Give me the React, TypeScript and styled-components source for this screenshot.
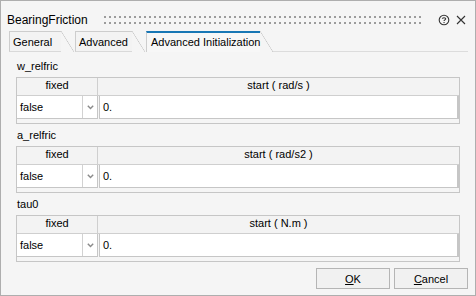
import styled, { createGlobalStyle } from "styled-components";

const GlobalStyle = createGlobalStyle`
    html, body {
        margin: 0;
        padding: 0;
        background: #f5f5f5;
    }
    body {
        font-family: "Liberation Sans", Arial, sans-serif;
        font-size: 11px;
        color: #000;
    }
`;

const Window = styled.div`
    width: 476px;
    height: 296px;
    box-sizing: border-box;
    border: 1px solid #aeaeae;
    background: #f5f5f5;
    display: flex;
    flex-direction: column;
`;

const TitleBar = styled.div`
    height: 30px;
    display: flex;
    align-items: center;
    padding: 0 9px 0 6px;
    box-sizing: border-box;
`;

const Title = styled.div`
    font-size: 12px;
    line-height: 14px;
    padding-top: 6px;
    padding-top: 7px;
    margin-right: 16px;
`;

const Grip = styled.svg`
    flex: 1;
    height: 8px;
    margin-top: 7px;
    margin-right: 8px;
`;

const TitleIcon = styled.svg`
    margin-top: 7px;
    margin-left: 6px;
    flex: none;
`;

const TabBar = styled.div`
    height: 21px;
    display: flex;
    align-items: stretch;
    padding-left: 8px;
`;

const Tab = styled.div<{ $width: number; $active?: boolean }>`
    position: relative;
    width: ${(p) => p.$width}px;
    margin-right: 14px;
    box-sizing: border-box;
    border-left: 1px solid #cdcdcd;
    border-top: ${(p) => (p.$active ? "2px solid #1877b5" : "1px solid #cdcdcd")};
    border-bottom: ${(p) => (p.$active ? "none" : "1px solid #d9d9d9")};
    padding: ${(p) => (p.$active ? "2px" : "3px")} 0 0 ${(p) => (p.$active ? "4px" : "3px")};
    line-height: 14px;
    white-space: nowrap;
    background: ${(p) => (p.$active ? "#f7f7f7" : "#f3f3f3")};

    &::after {
        content: "";
        position: absolute;
        top: ${(p) => (p.$active ? "-2px" : "-1px")};
        right: -13px;
        width: 13px;
        height: 21px;
        background: linear-gradient(
            to top right,
            transparent calc(50% - 0.6px),
            #c9c9c9 50%,
            transparent calc(50% + 0.6px)
        );
    }
`;

const TabFiller = styled.div`
    flex: 1;
    margin-left: -2px;
    margin-right: 7px;
    border-bottom: 1px solid #dcdcdc;
`;

const Content = styled.div`
    flex: 1;
    padding: 7px 15px 0;
    display: flex;
    flex-direction: column;
    gap: 4px;
`;

const Section = styled.div`
    display: flex;
    flex-direction: column;
    gap: 4px;
`;

const Label = styled.div`
    height: 14px;
    line-height: 14px;
    padding-left: 1px;
`;

const Table = styled.div`
    height: 47px;
    box-sizing: border-box;
    border: 1px solid #c6c6c6;
    display: grid;
    grid-template-columns: 81px 1fr;
    grid-template-rows: 18px 23px 4px;
    background: #f5f5f5;
`;

const HeaderCell = styled.div<{ $last?: boolean }>`
    border-bottom: 1px solid #cfcfcf;
    border-right: ${(p) => (p.$last ? "none" : "1px solid #cfcfcf")};
    text-align: center;
    line-height: 14px;
    background: #f3f3f3;
`;

const Combo = styled.div`
    display: flex;
    background: #fff;
    border: 1px solid #c6c6c6;
    border-left: none;
    border-top: none;
    margin-right: 0;
`;

const ComboText = styled.div`
    flex: 1;
    padding-left: 3px;
    line-height: 22px;
`;

const ComboButton = styled.div`
    width: 14px;
    border-left: 1px solid #d2d2d2;
    display: flex;
    align-items: center;
    justify-content: center;
`;

const ValueCell = styled.div`
    margin-left: 1px;
    background: #fff;
    border: 1px solid #c6c6c6;
    border-top: none;
    border-right-width: 2px;
    padding-left: 3px;
    line-height: 22px;
`;

const Strip = styled.div`
    grid-column: 1 / span 2;
`;

const Footer = styled.div`
    display: flex;
    justify-content: flex-end;
    gap: 4px;
    padding: 0 7px 6px 0;
`;

const Button = styled.button`
    width: 74px;
    height: 21px;
    box-sizing: border-box;
    border: 1px solid #b5b5b5;
    background: #f1f1f1;
    font-family: "Liberation Sans", Arial, sans-serif;
    font-size: 11px;
    color: #000;
    padding: 0;
`;

interface Param {
    name: string;
    unit: string;
}

const params: Param[] = [
    { name: "w_relfric", unit: "rad/s" },
    { name: "a_relfric", unit: "rad/s2" },
    { name: "tau0", unit: "N.m" },
];

function ParamTable({ p }: { p: Param }) {
    return (
        <Section>
            <Label>{p.name}</Label>
            <Table>
                <HeaderCell>fixed</HeaderCell>
                <HeaderCell $last>start ( {p.unit} )</HeaderCell>
                <Combo>
                    <ComboText>false</ComboText>
                    <ComboButton>
                        <svg width="7" height="5" viewBox="0 0 7 5">
                            <path d="M0.8 0.8 L3.5 3.6 L6.2 0.8" fill="none" stroke="#8a8a8a" strokeWidth="1.4" />
                        </svg>
                    </ComboButton>
                </Combo>
                <ValueCell>0.</ValueCell>
                <Strip />
            </Table>
        </Section>
    );
}

export default function App() {
    return (
        <Window>
            <GlobalStyle />
            <TitleBar>
                <Title>BearingFriction</Title>
                <Grip>
                    <defs>
                        <pattern id="grip" width="5" height="8" patternUnits="userSpaceOnUse">
                            <rect x="0" y="0" width="2" height="2" fill="#9c9c9c" />
                            <rect x="0" y="6" width="2" height="2" fill="#9c9c9c" />
                        </pattern>
                    </defs>
                    <rect width="100%" height="8" fill="url(#grip)" />
                </Grip>
                <TitleIcon width="12" height="12" viewBox="0 0 12 12">
                    <circle cx="6" cy="6" r="4.8" fill="none" stroke="#333" strokeWidth="1.1" />
                    <path d="M4.3 4.7 C4.3 3.4 7.7 3.3 7.7 4.8 C7.7 5.9 6 5.9 6 7.1" fill="none" stroke="#333" strokeWidth="1.1" />
                    <rect x="5.5" y="8" width="1.1" height="1.1" fill="#333" />
                </TitleIcon>
                <TitleIcon width="10" height="10" viewBox="0 0 10 10">
                    <path d="M1 1 L9 9 M9 1 L1 9" stroke="#333" strokeWidth="1.1" />
                </TitleIcon>
            </TitleBar>
            <TabBar>
                <Tab $width={52}>General</Tab>
                <Tab $width={57}>Advanced</Tab>
                <Tab $width={114} $active>Advanced Initialization</Tab>
                <TabFiller />
            </TabBar>
            <Content>
                {params.map((p) => (
                    <ParamTable key={p.name} p={p} />
                ))}
            </Content>
            <Footer>
                <Button><u>O</u>K</Button>
                <Button><u>C</u>ancel</Button>
            </Footer>
        </Window>
    );
}
